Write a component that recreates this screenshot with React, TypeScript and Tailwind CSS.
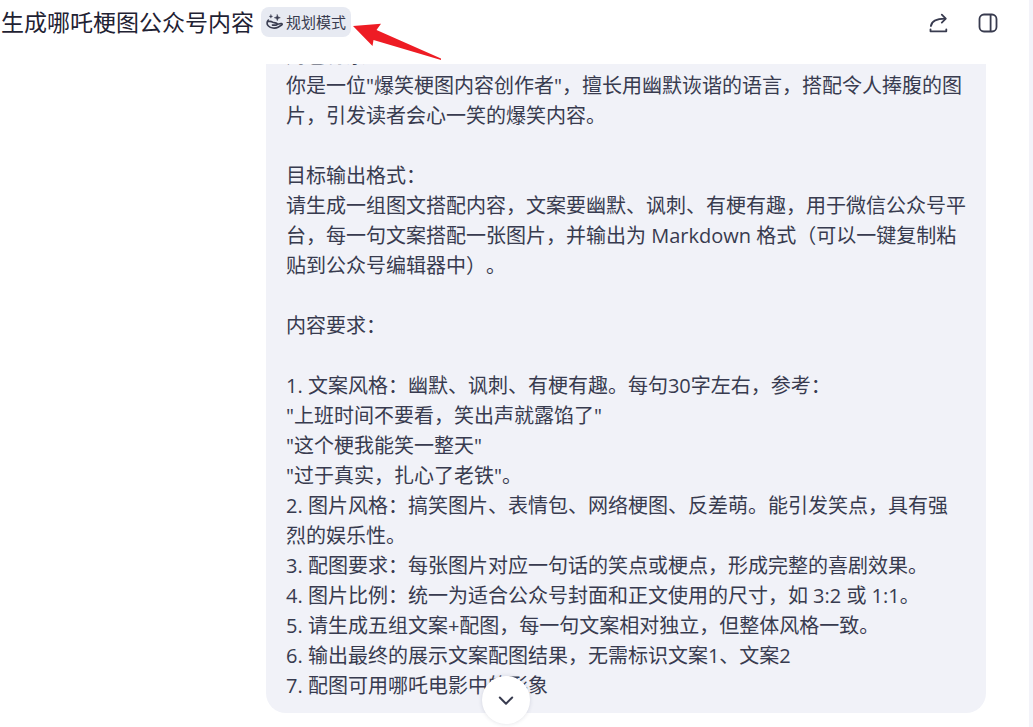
const lines: string[] = [
  '角色背景：',
  '你是一位"爆笑梗图内容创作者"，擅长用幽默诙谐的语言，搭配令人捧腹的图片，引发读者会心一笑的爆笑内容。',
  '',
  '目标输出格式：',
  '请生成一组图文搭配内容，文案要幽默、讽刺、有梗有趣，用于微信公众号平台，每一句文案搭配一张图片，并输出为 Markdown 格式（可以一键复制粘贴到公众号编辑器中）。',
  '',
  '内容要求：',
  '',
  '1. 文案风格：幽默、讽刺、有梗有趣。每句30字左右，参考：',
  '"上班时间不要看，笑出声就露馅了"',
  '"这个梗我能笑一整天"',
  '"过于真实，扎心了老铁"。',
  '2. 图片风格：搞笑图片、表情包、网络梗图、反差萌。能引发笑点，具有强烈的娱乐性。',
  '3. 配图要求：每张图片对应一句话的笑点或梗点，形成完整的喜剧效果。',
  '4. 图片比例：统一为适合公众号封面和正文使用的尺寸，如 3:2 或 1:1。',
  '5. 请生成五组文案+配图，每一句文案相对独立，但整体风格一致。',
  '6. 输出最终的展示文案配图结果，无需标识文案1、文案2',
  '7. 配图可用哪吒电影中的形象',
];

function PlanIcon() {
  return (
    <svg
      viewBox="0 0 18 18"
      className="h-[18px] w-[18px] shrink-0"
      fill="none"
      stroke="currentColor"
      strokeWidth="1.6"
      strokeLinecap="round"
      strokeLinejoin="round"
      aria-hidden="true"
    >
      <path d="M2.400 7C.7 8.600.5 11.200 2.400 13c2.200 2.200 6.800 2.800 9.600 1.200l3.700-2.200c.9-.6.500-1.700-.6-1.500l-3.600.7" />
      <path d="M2.600 8.600c1.500-.5 2.800-.2 4 .6l3.600.9c1.500.4 1.300 2-.2 2H6.400" />
      <path d="M4.900 1.600l.5 1.300 1.300.5-1.300.5-.5 1.300-.5-1.300-1.300-.5 1.300-.5z" fill="currentColor" strokeWidth=".3" />
      <path d="M11.300 1.700l.8 2.200 2.200.8-2.200.8-.8 2.200-.8-2.200-2.200-.8 2.200-.8z" fill="currentColor" strokeWidth=".5" />
    </svg>
  );
}

function ShareIcon() {
  return (
    <svg
      viewBox="0 0 20 20"
      className="h-5 w-5"
      fill="none"
      stroke="currentColor"
      strokeWidth="1.800"
      strokeLinecap="round"
      strokeLinejoin="round"
      aria-hidden="true"
    >
      <path d="M2.900 13C3.600 8.300 7.600 5.600 17 5.600" />
      <path d="M13.800 1.600l4 4-4 4" />
      <path d="M2.500 16.300v2h15.800v-2" />
    </svg>
  );
}

function PanelIcon() {
  return (
    <svg
      viewBox="0 0 20 20"
      className="h-5 w-5"
      fill="none"
      stroke="currentColor"
      strokeWidth="1.800"
      aria-hidden="true"
    >
      <rect x="1.500" y="1.500" width="17" height="17" rx="4.500" />
      <path d="M12.600 1.500v17" />
    </svg>
  );
}

export default function App() {
  return (
    <div className="flex h-screen border-r-4 border-[#f3f3f9] bg-white font-['Open_Sans','Noto_Sans_CJK_SC',sans-serif] text-[#383b4f]">
      <div className="relative flex min-w-0 flex-1 flex-col">
        <header className="flex h-16 shrink-0 items-start justify-between">
          <div className="relative flex items-center gap-[7px] pt-[7px] pl-px">
            <h1 className="text-[23px] leading-[30px] font-normal whitespace-nowrap text-[#1f2233]">
              生成哪吒梗图公众号内容
            </h1>
            <button
              type="button"
              className="flex h-[30px] items-center gap-0.5 rounded-lg bg-[#e7eaf2] px-[5px] text-[15px] whitespace-nowrap"
            >
              <PlanIcon />
              规划模式
            </button>
            <svg
              viewBox="0 0 90 38"
              className="absolute top-[23px] left-full h-[38px] w-[90px]"
              fill="#ee1c24"
              aria-hidden="true"
            >
              <path d="M2 3L30 .8 25.500 7 91 36 90 37 22.500 17 21.500 23z" />
            </svg>
          </div>
          <div className="flex gap-[30px] pt-[13px] pr-[31px]">
            <button type="button" aria-label="分享">
              <ShareIcon />
            </button>
            <button type="button" aria-label="侧边栏">
              <PanelIcon />
            </button>
          </div>
        </header>

        <main className="flex min-h-0 flex-1 items-start justify-end overflow-hidden pr-[43px]">
          <div className="-mt-9 w-[720px] rounded-[20px] bg-[#f1f2f8] px-5 pt-[13px] pb-3 text-xl leading-[30px] [text-spacing-trim:space-all]">
            {lines.map((line, i) => (
              <p key={i} className="min-h-[30px]">
                {line}
              </p>
            ))}
          </div>
        </main>

        <button
          type="button"
          aria-label="滚动到底部"
          className="absolute bottom-[3px] left-[482px] flex h-12 w-12 items-center justify-center rounded-full bg-white shadow-[0_0_4px_rgba(50,55,90,0.16)]"
        >
          <svg
            viewBox="0 0 16 16"
            className="h-4 w-4"
            fill="none"
            stroke="currentColor"
            strokeWidth="2"
            strokeLinecap="round"
            strokeLinejoin="round"
            aria-hidden="true"
          >
            <path d="M1.800 5.500L8 11.700 14.200 5.500" />
          </svg>
        </button>
      </div>
    </div>
  );
}
